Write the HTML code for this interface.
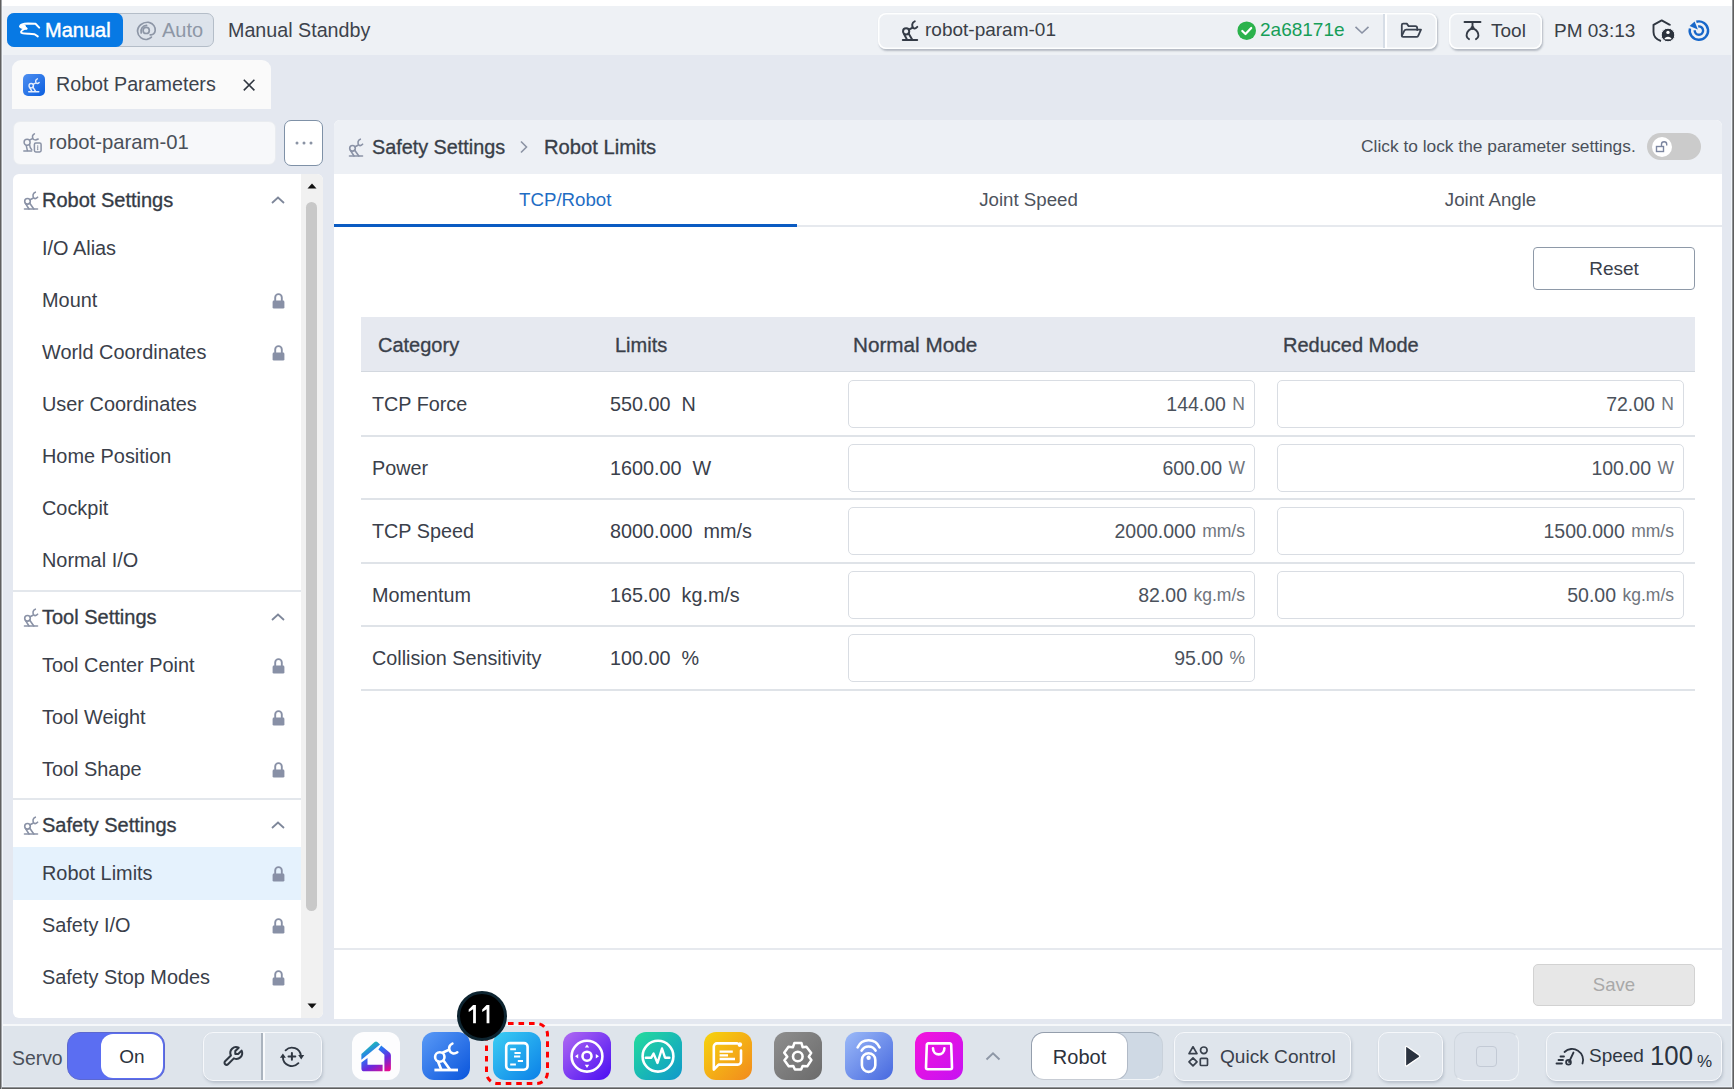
<!DOCTYPE html>
<html><head><meta charset="utf-8">
<style>
*{box-sizing:border-box}
html,body{margin:0;padding:0}
body{width:1734px;height:1089px;overflow:hidden;position:relative;background:#e4e8f0;font-family:"Liberation Sans",sans-serif;color:#383e48}
.a{position:absolute}
.sb{-webkit-text-stroke:0.32px currentColor}
.t{position:absolute;white-space:nowrap;line-height:30px;height:30px}
svg{position:absolute;overflow:visible}
</style></head><body>
<svg width="0" height="0" style="position:absolute"><defs>
<symbol id="robo" viewBox="0 0 16 19"><g fill="none" stroke="#8a92a6" stroke-width="1.6" stroke-linecap="round" stroke-linejoin="round">
<path d="M1.5 18 H14.5"/><circle cx="4.5" cy="10.3" r="2.8"/><path d="M2.6 12.6 L6 18 M6.6 12 L10.8 18"/><path d="M7 8.8 L10 7.2"/><path d="M12.3 1.2 C9.6 2.2 9.4 5.6 11 7.2 C12 8 13.2 7.6 14.6 6.2"/></g></symbol>
<symbol id="lock" viewBox="0 0 13 17"><path d="M3.2 9 V5.4 A3.3 3.3 0 0 1 9.8 5.4 V9" fill="none" stroke="#8890a6" stroke-width="1.9"/><rect x="0.6" y="8.6" width="11.8" height="8" rx="1.3" fill="#8890a6"/></symbol>
</defs></svg>
<!-- frame edges -->
<div class="a" style="left:0;top:0;width:1734px;height:6px;background:#fff"></div>
<div class="a" style="left:0;top:6px;width:1734px;height:49px;background:#eef1f5"></div>

<!-- TOP BAR -->
<div class="a" style="left:7px;top:13px;width:207px;height:34px;background:#dde3eb;border:1px solid #b4bdc8;border-radius:7px"></div>
<div class="a" style="left:7px;top:13px;width:116px;height:34px;background:#0779e4;border-radius:7px"></div>
<div class="t" style="left:45px;top:15px;font-size:20px;color:#fff;-webkit-text-stroke:0.45px #fff">Manual</div>
<div class="t" style="left:162px;top:15px;font-size:20px;color:#8d97a6">Auto</div>
<div class="t" style="left:228px;top:15px;font-size:19.7px;color:#3d434c">Manual Standby</div>

<div class="a" style="left:878px;top:13px;width:559px;height:36px;background:#edf0f4;border-radius:8px;box-shadow:1px 1.5px 2px rgba(60,70,90,.32),0 0 0 1.5px rgba(255,255,255,.95) inset"></div>
<div class="a" style="left:1383px;top:14px;width:2px;height:34px;background:#d6dde6"></div>
<div class="a" style="left:1385px;top:14px;width:1.5px;height:34px;background:#fff"></div>
<div class="t" style="left:925px;top:15px;font-size:19px;color:#3a3f47">robot-param-01</div>
<div class="t" style="left:1260px;top:15px;font-size:19px;color:#169e58">2a68171e</div>
<div class="a" style="left:1449px;top:13px;width:93px;height:36px;background:#edf0f4;border-radius:8px;box-shadow:1px 1.5px 2px rgba(60,70,90,.32),0 0 0 1.5px rgba(255,255,255,.95) inset"></div>
<div class="t" style="left:1491px;top:16px;font-size:19px;color:#3a3f47">Tool</div>
<div class="t" style="left:1554px;top:16px;font-size:19px;color:#3a3f47">PM 03:13</div>
<svg style="left:18px;top:21px" width="23" height="17" viewBox="0 0 23 17"><g fill="none" stroke="#fff" stroke-width="2" stroke-linecap="round" stroke-linejoin="round"><path d="M2 5.5 C2.5 3.5 6 2.5 10 2.5 L17.5 2.8 L21.2 6.6"/><path d="M8.2 7.4 C5 8.5 2.5 10 3.2 11.6 C4 12.6 8 12.6 11 12.7 L16.6 13.2 L19.8 15.4"/></g><ellipse cx="4.8" cy="5.6" rx="3.2" ry="2.2" fill="#fff"/><path d="M4 6.5 L8.5 7.6" stroke="#fff" stroke-width="2.2" stroke-linecap="round"/></svg>
<svg style="left:136px;top:21px" width="21" height="20" viewBox="0 0 21 20"><g fill="none" stroke="#8d96a6" stroke-width="1.7" stroke-linecap="round"><path d="M12.6 1.3 C6.5 0.8 1.2 5.2 1.6 10.8 C2 15.8 6.5 19 11 18.4 C12.8 18.1 14.3 17.3 15.4 16.2"/><path d="M13.6 1.6 C17.2 2.6 19.6 6 19.2 9.6 C18.9 12.4 16.8 14.3 14.2 13.8"/><circle cx="10.2" cy="9.4" r="3.1"/><path d="M5.2 12 C4.2 8 6.8 4.6 10.6 4.4"/></g></svg>
<svg style="left:901px;top:20px" width="18" height="21" viewBox="0 0 16 19"><g fill="none" stroke="#343b46" stroke-width="1.8" stroke-linecap="round" stroke-linejoin="round"><path d="M1.5 18 H14.5"/><circle cx="4.5" cy="10.3" r="2.8"/><path d="M2.6 12.6 L5.4 18 M6.6 12 L10.2 18"/><path d="M7 8.8 L10 7.2"/><path d="M12.3 1.2 C9.6 2.2 9.4 5.6 11 7.2 C12 8 13.2 7.6 14.6 6.2"/></g></svg>
<svg style="left:1237px;top:21px" width="20" height="20" viewBox="0 0 20 20"><circle cx="9.7" cy="9.7" r="9.3" fill="#2bb24c"/><path d="M5.3 10 L8.5 13 L14.2 7" fill="none" stroke="#fff" stroke-width="2.2" stroke-linecap="round" stroke-linejoin="round"/></svg>
<svg style="left:1354px;top:25px" width="16" height="10" viewBox="0 0 16 10"><path d="M1.5 1.8 L8 8 L14.5 1.8" fill="none" stroke="#8a92a4" stroke-width="1.6"/></svg>
<svg style="left:1400px;top:22px" width="23" height="17" viewBox="0 0 23 17"><g fill="none" stroke="#3a4250" stroke-width="1.8" stroke-linejoin="round" stroke-linecap="round"><path d="M1.8 13.5 V3 Q1.8 1.6 3.2 1.6 H6.8 L8.6 4.1 H15.3 Q17.2 4.1 17.2 6.2 V8"/><path d="M1.8 13.8 L4.2 8.8 Q4.8 7.6 6.2 7.6 H21 L18.2 13.8 Q17.7 14.9 16.4 14.9 H3 Q1.8 14.9 1.8 13.8 Z"/></g></svg>
<svg style="left:1462px;top:20px" width="21" height="21" viewBox="0 0 21 21"><g fill="none" stroke="#343b46" stroke-width="1.9" stroke-linecap="round" stroke-linejoin="round"><path d="M2.5 2 H18.5"/><path d="M10.5 2 V6.5"/><path d="M9.4 8.6 C6.2 10.2 4.4 12.8 4.6 15.8 C4.8 17.6 5.8 18.6 7 19.2"/><path d="M11.6 8.6 C14.8 10.2 16.6 12.8 16.4 15.8 C16.2 17.6 15.2 18.6 14 19.2"/></g><circle cx="10.5" cy="8" r="2" fill="#343b46"/></svg>
<svg style="left:1651px;top:18px" width="26" height="26" viewBox="0 0 26 26"><path d="M18.8 7.5 V6.8 L10.7 2.4 L2.5 6.8 V14 C2.5 18 5.5 21.5 10 23" fill="none" stroke="#2f3640" stroke-width="1.9" stroke-linejoin="round"/><circle cx="17" cy="17" r="6.8" fill="#2b323c" stroke="#eef1f5" stroke-width="1"/><circle cx="17" cy="14.4" r="1.7" fill="#fff"/><path d="M13.4 21.2 C13.8 17.8 20.2 17.8 20.6 21.2 Z" fill="#fff"/></svg>
<svg style="left:1687px;top:19px" width="24" height="23" viewBox="0 0 24 23"><g fill="none" stroke="#1767c9" stroke-width="2.4"><path d="M9.36 2.76 A9.2 9.2 0 1 1 2.95 9.45"/><path d="M11.2 7.46 A4.2 4.2 0 1 1 7.71 11.26"/></g><path d="M2.6 6.9 L7.6 2.4 L10.9 10.6 Z" fill="#1767c9"/></svg>
<svg style="z-index:5;left:27px;top:76.5px" width="13.5" height="16" viewBox="0 0 16 19"><g fill="none" stroke="#e6eefc" stroke-width="1.7" stroke-linecap="round" stroke-linejoin="round"><path d="M2 17.5 H14"/><circle cx="5" cy="10.3" r="2.6"/><path d="M3.3 12.6 L5.8 17 M7 12 L10.2 17"/><path d="M7.2 8.8 L10 7.4"/><path d="M12.3 2.2 C9.9 3 9.7 5.8 11.1 7.2 C12 8 13.2 7.6 14.4 6.4"/></g></svg>
<svg style="z-index:5;left:242px;top:78px" width="14" height="14" viewBox="0 0 14 14"><path d="M1.8 1.8 L12.4 12.4 M12.4 1.8 L1.8 12.4" stroke="#2f3640" stroke-width="1.6"/></svg>
<svg style="z-index:5;left:23px;top:133px" width="20" height="20" viewBox="0 0 20 20"><g fill="none" stroke="#8a92a6" stroke-width="1.5" stroke-linecap="round" stroke-linejoin="round"><path d="M0.8 17.9 H8.6"/><circle cx="4.1" cy="9.3" r="3"/><path d="M3.2 12.4 L4.4 17.6 M6.6 11.8 C6.8 14.5 7.4 15.8 8.8 16.8"/><path d="M6.8 6.9 L9.8 5.5"/><path d="M11.4 0.8 C9.6 1.8 9.1 3.6 9.9 5.5 C10.6 6.9 12.4 7.6 15.2 6"/><rect x="11.4" y="10.1" width="6.7" height="8.8" rx="1.4"/><path d="M14.7 12.9 V13.2 M14.7 14.6 V14.9 M14.7 16.2 V16.5" stroke-width="1.3"/></g></svg>
<svg style="z-index:5;left:294px;top:140px" width="20" height="6" viewBox="0 0 20 6"><circle cx="3" cy="3" r="1.5" fill="#8a93a4"/><circle cx="10" cy="3" r="1.5" fill="#8a93a4"/><circle cx="17" cy="3" r="1.5" fill="#8a93a4"/></svg>

<!-- TAB STRIP -->
<div class="a" style="left:12px;top:60px;width:259px;height:49px;background:#fafafa;border-radius:9px 9px 0 0"></div>
<div class="a" style="left:23px;top:74px;width:22px;height:22px;border-radius:5px;background:linear-gradient(135deg,#4f8ff0,#0b5fe0)"></div>
<div class="t" style="left:56px;top:69px;font-size:19.7px;color:#3d434c">Robot Parameters</div>

<!-- LEFT FIELD -->
<div class="a" style="left:13px;top:121px;width:263px;height:44px;background:#f7f8fa;border-radius:7px;border:1px solid #e9ecf0"></div>
<div class="t" style="left:49px;top:127px;font-size:20.3px;color:#4a5059">robot-param-01</div>
<div class="a" style="left:284px;top:120px;width:39px;height:46px;background:#fff;border:1.8px solid #7f91a7;border-radius:7px"></div>

<!-- SIDEBAR -->
<div class="a" id="sb" style="left:13px;top:174px;width:310px;height:844px;background:#fff;border-radius:6px;overflow:hidden">
<div class="a" style="left:0;top:673px;width:288px;height:53px;background:#e5f2fd"></div>
<svg style="left:10px;top:17px" width="16" height="19" viewBox="0 0 16 19"><use href="#robo"/></svg>
<div class="t" style="left:29px;top:11px;font-size:20px;color:#353b45;-webkit-text-stroke:0.32px #353b45">Robot Settings</div>
<svg style="left:258px;top:22px" width="14" height="8" viewBox="0 0 14 8"><path d="M1 7 L7 1.5 L13 7" fill="none" stroke="#7e879a" stroke-width="1.8"/></svg>
<div class="t" style="left:29px;top:59px;font-size:19.9px;color:#3a404a">I/O Alias</div>
<div class="t" style="left:29px;top:111px;font-size:19.9px;color:#3a404a">Mount</div><svg style="left:259px;top:117.5px" width="13" height="17" viewBox="0 0 13 17"><use href="#lock"/></svg>
<div class="t" style="left:29px;top:163px;font-size:19.9px;color:#3a404a">World Coordinates</div><svg style="left:259px;top:169.5px" width="13" height="17" viewBox="0 0 13 17"><use href="#lock"/></svg>
<div class="t" style="left:29px;top:215px;font-size:19.9px;color:#3a404a">User Coordinates</div>
<div class="t" style="left:29px;top:267px;font-size:19.9px;color:#3a404a">Home Position</div>
<div class="t" style="left:29px;top:319px;font-size:19.9px;color:#3a404a">Cockpit</div>
<div class="t" style="left:29px;top:371px;font-size:19.9px;color:#3a404a">Normal I/O</div>
<div class="a" style="left:0;top:416px;width:288px;height:2px;background:#e3e7ec"></div>
<svg style="left:10px;top:434px" width="16" height="19" viewBox="0 0 16 19"><use href="#robo"/></svg>
<div class="t" style="left:29px;top:428px;font-size:20px;color:#353b45;-webkit-text-stroke:0.32px #353b45">Tool Settings</div>
<svg style="left:258px;top:439px" width="14" height="8" viewBox="0 0 14 8"><path d="M1 7 L7 1.5 L13 7" fill="none" stroke="#7e879a" stroke-width="1.8"/></svg>
<div class="t" style="left:29px;top:476px;font-size:19.9px;color:#3a404a">Tool Center Point</div><svg style="left:259px;top:482.5px" width="13" height="17" viewBox="0 0 13 17"><use href="#lock"/></svg>
<div class="t" style="left:29px;top:528px;font-size:19.9px;color:#3a404a">Tool Weight</div><svg style="left:259px;top:534.5px" width="13" height="17" viewBox="0 0 13 17"><use href="#lock"/></svg>
<div class="t" style="left:29px;top:580px;font-size:19.9px;color:#3a404a">Tool Shape</div><svg style="left:259px;top:586.5px" width="13" height="17" viewBox="0 0 13 17"><use href="#lock"/></svg>
<div class="a" style="left:0;top:624px;width:288px;height:2px;background:#e3e7ec"></div>
<svg style="left:10px;top:642px" width="16" height="19" viewBox="0 0 16 19"><use href="#robo"/></svg>
<div class="t" style="left:29px;top:636px;font-size:20px;color:#353b45;-webkit-text-stroke:0.32px #353b45">Safety Settings</div>
<svg style="left:258px;top:647px" width="14" height="8" viewBox="0 0 14 8"><path d="M1 7 L7 1.5 L13 7" fill="none" stroke="#7e879a" stroke-width="1.8"/></svg>
<div class="t" style="left:29px;top:684px;font-size:19.9px;color:#3a404a">Robot Limits</div><svg style="left:259px;top:690.5px" width="13" height="17" viewBox="0 0 13 17"><use href="#lock"/></svg>
<div class="t" style="left:29px;top:736px;font-size:19.9px;color:#3a404a">Safety I/O</div><svg style="left:259px;top:742.5px" width="13" height="17" viewBox="0 0 13 17"><use href="#lock"/></svg>
<div class="t" style="left:29px;top:788px;font-size:19.9px;color:#3a404a">Safety Stop Modes</div><svg style="left:259px;top:794.5px" width="13" height="17" viewBox="0 0 13 17"><use href="#lock"/></svg>
<div class="a" style="left:288px;top:0;width:22px;height:844px;background:#f1f1f1"></div>
<svg style="left:294px;top:9px" width="10" height="6" viewBox="0 0 10 6"><path d="M0.5 5.6 L5 0.6 L9.5 5.6 Z" fill="#111"/></svg>
<svg style="left:294px;top:829px" width="10" height="6" viewBox="0 0 10 6"><path d="M0.5 0.4 L5 5.4 L9.5 0.4 Z" fill="#111"/></svg>
<div class="a" style="left:293px;top:28px;width:10.5px;height:709px;background:#c8c8c8;border-radius:6px"></div>
</div>

<!-- MAIN PANEL -->
<div class="a" style="left:334px;top:120px;width:1388px;height:899px;background:#fff;border-radius:6px 6px 0 0;overflow:hidden">
  <div class="a" style="left:0;top:0;width:1388px;height:54px;background:#edf0f5"></div>
  <svg style="left:14px;top:18px" width="16" height="19" viewBox="0 0 16 19"><use href="#robo"/></svg>
  <div class="t" style="left:38px;top:12px;font-size:19.8px;color:#383e48;-webkit-text-stroke:0.32px #383e48">Safety Settings</div>
  <svg style="left:185px;top:20px" width="10" height="14" viewBox="0 0 10 14"><path d="M2 1.5 L7.5 7 L2 12.5" fill="none" stroke="#8b93a3" stroke-width="1.6"/></svg>
  <div class="t" style="left:210px;top:12px;font-size:20.2px;color:#383e48;-webkit-text-stroke:0.32px #383e48">Robot Limits</div>
  <div class="t" style="left:1027px;top:11px;font-size:17.35px;color:#4a505a">Click to lock the parameter settings.</div>
  <div class="a" style="left:1313px;top:13px;width:54px;height:27px;border-radius:14px;background:#cbcbcb"></div>
  <div class="a" style="left:1318px;top:17px;width:20px;height:20px;border-radius:10px;background:#fff"></div>
  <svg style="left:1321px;top:20px" width="14" height="14" viewBox="0 0 14 14"><rect x="1.5" y="6.5" width="7" height="5" fill="none" stroke="#7c86a0" stroke-width="1.4"/><path d="M6.5 6.5 V4.3 A2.6 2.6 0 0 1 11.7 4.3 V5.5" fill="none" stroke="#7c86a0" stroke-width="1.4"/></svg>
  <div class="a" style="left:0px;top:105px;width:1388px;height:2px;background:#e6e9ee"></div>
  <div class="a" style="left:0px;top:104px;width:463px;height:3px;background:#0b5bc2"></div>
  <div class="t" style="left:185px;top:65px;font-size:18.7px;color:#1f6dc4">TCP/Robot</div>
  <div class="t" style="left:463px;top:65px;width:463px;text-align:center;font-size:18.7px;color:#4d535d">Joint Speed</div>
  <div class="t" style="left:925px;top:65px;width:463px;text-align:center;font-size:18.7px;color:#4d535d">Joint Angle</div>
  <div class="a" style="left:1199px;top:127px;width:162px;height:43px;border:1.5px solid #8e99a8;border-radius:4px;background:#fff"></div>
  <div class="t" style="left:1199px;top:134px;width:162px;text-align:center;font-size:19px;color:#3a404a">Reset</div>
  <div class="a" style="left:27px;top:197px;width:1334px;height:55px;background:#e6e9f0;border-bottom:1.5px solid #d3d8df"></div>
  <div class="t" style="left:44px;top:210px;font-size:20px;color:#3a404a;-webkit-text-stroke:0.32px #3a404a">Category</div>
  <div class="t" style="left:281px;top:210px;font-size:20px;color:#3a404a;-webkit-text-stroke:0.32px #3a404a">Limits</div>
  <div class="t" style="left:519px;top:210px;font-size:20.7px;color:#3a404a;-webkit-text-stroke:0.32px #3a404a">Normal Mode</div>
  <div class="t" style="left:949px;top:210px;font-size:20px;color:#3a404a;-webkit-text-stroke:0.32px #3a404a">Reduced Mode</div>
  <div class="a" style="left:27px;top:315px;width:1334px;height:1.5px;background:#dfe3e8"></div>
  <div class="t" style="left:38px;top:269.0px;font-size:19.8px;color:#3a404a">TCP Force</div>
  <div class="t" style="left:276px;top:269.0px;font-size:19.8px;color:#3a404a">550.00&nbsp; N</div>
  <div class="a" style="left:514px;top:260px;width:407px;height:48px;border:1.5px solid #d9dde3;border-radius:5px;background:#fff"></div>
  <div class="t" style="left:514px;top:269.0px;width:397px;text-align:right;font-size:19.5px;color:#4b525c">144.00 <span style="font-size:17.5px;color:#70757d;margin-left:1px;vertical-align:1px">N</span></div>
  <div class="a" style="left:943px;top:260px;width:407px;height:48px;border:1.5px solid #d9dde3;border-radius:5px;background:#fff"></div>
  <div class="t" style="left:943px;top:269.0px;width:397px;text-align:right;font-size:19.5px;color:#4b525c">72.00 <span style="font-size:17.5px;color:#70757d;margin-left:1px;vertical-align:1px">N</span></div>
  <div class="a" style="left:27px;top:378px;width:1334px;height:1.5px;background:#dfe3e8"></div>
  <div class="t" style="left:38px;top:332.5px;font-size:19.8px;color:#3a404a">Power</div>
  <div class="t" style="left:276px;top:332.5px;font-size:19.8px;color:#3a404a">1600.00&nbsp; W</div>
  <div class="a" style="left:514px;top:324px;width:407px;height:48px;border:1.5px solid #d9dde3;border-radius:5px;background:#fff"></div>
  <div class="t" style="left:514px;top:332.5px;width:397px;text-align:right;font-size:19.5px;color:#4b525c">600.00 <span style="font-size:17.5px;color:#70757d;margin-left:1px;vertical-align:1px">W</span></div>
  <div class="a" style="left:943px;top:324px;width:407px;height:48px;border:1.5px solid #d9dde3;border-radius:5px;background:#fff"></div>
  <div class="t" style="left:943px;top:332.5px;width:397px;text-align:right;font-size:19.5px;color:#4b525c">100.00 <span style="font-size:17.5px;color:#70757d;margin-left:1px;vertical-align:1px">W</span></div>
  <div class="a" style="left:27px;top:442px;width:1334px;height:1.5px;background:#dfe3e8"></div>
  <div class="t" style="left:38px;top:396.0px;font-size:19.8px;color:#3a404a">TCP Speed</div>
  <div class="t" style="left:276px;top:396.0px;font-size:19.8px;color:#3a404a">8000.000&nbsp; mm/s</div>
  <div class="a" style="left:514px;top:387px;width:407px;height:48px;border:1.5px solid #d9dde3;border-radius:5px;background:#fff"></div>
  <div class="t" style="left:514px;top:396.0px;width:397px;text-align:right;font-size:19.5px;color:#4b525c">2000.000 <span style="font-size:17.5px;color:#70757d;margin-left:1px;vertical-align:1px">mm/s</span></div>
  <div class="a" style="left:943px;top:387px;width:407px;height:48px;border:1.5px solid #d9dde3;border-radius:5px;background:#fff"></div>
  <div class="t" style="left:943px;top:396.0px;width:397px;text-align:right;font-size:19.5px;color:#4b525c">1500.000 <span style="font-size:17.5px;color:#70757d;margin-left:1px;vertical-align:1px">mm/s</span></div>
  <div class="a" style="left:27px;top:505px;width:1334px;height:1.5px;background:#dfe3e8"></div>
  <div class="t" style="left:38px;top:459.5px;font-size:19.8px;color:#3a404a">Momentum</div>
  <div class="t" style="left:276px;top:459.5px;font-size:19.8px;color:#3a404a">165.00&nbsp; kg.m/s</div>
  <div class="a" style="left:514px;top:451px;width:407px;height:48px;border:1.5px solid #d9dde3;border-radius:5px;background:#fff"></div>
  <div class="t" style="left:514px;top:459.5px;width:397px;text-align:right;font-size:19.5px;color:#4b525c">82.00 <span style="font-size:17.5px;color:#70757d;margin-left:1px;vertical-align:1px">kg.m/s</span></div>
  <div class="a" style="left:943px;top:451px;width:407px;height:48px;border:1.5px solid #d9dde3;border-radius:5px;background:#fff"></div>
  <div class="t" style="left:943px;top:459.5px;width:397px;text-align:right;font-size:19.5px;color:#4b525c">50.00 <span style="font-size:17.5px;color:#70757d;margin-left:1px;vertical-align:1px">kg.m/s</span></div>
  <div class="a" style="left:27px;top:569px;width:1334px;height:1.5px;background:#dfe3e8"></div>
  <div class="t" style="left:38px;top:523.0px;font-size:19.8px;color:#3a404a">Collision Sensitivity</div>
  <div class="t" style="left:276px;top:523.0px;font-size:19.8px;color:#3a404a">100.00&nbsp; %</div>
  <div class="a" style="left:514px;top:514px;width:407px;height:48px;border:1.5px solid #d9dde3;border-radius:5px;background:#fff"></div>
  <div class="t" style="left:514px;top:523.0px;width:397px;text-align:right;font-size:19.5px;color:#4b525c">95.00 <span style="font-size:17.5px;color:#70757d;margin-left:1px;vertical-align:1px">%</span></div>
  <div class="a" style="left:0px;top:828px;width:1388px;height:1.5px;background:#e6e9ee"></div>
  <div class="a" style="left:1199px;top:844px;width:162px;height:42px;border:1.5px solid #d2d2d2;border-radius:5px;background:#e7e7e7"></div>
  <div class="t" style="left:1199px;top:850px;width:162px;text-align:center;font-size:18.6px;color:#a9a9a9">Save</div>
</div>

<!-- BOTTOM BAR -->
<div class="a" style="left:0;top:1024px;width:1734px;height:2px;background:#f6f8fa"></div>
<div class="a" style="left:0;top:1026px;width:1734px;height:61px;background:#dee4eb"></div>
<div class="t" style="left:12px;top:1043px;font-size:19.4px;color:#4a505a">Servo</div>
<div class="a" style="left:67px;top:1032px;width:98px;height:48px;border-radius:13px;background:#5b6ef2;border:1.5px solid #5c68cf"></div>
<div class="a" style="left:101px;top:1034px;width:62px;height:44px;border-radius:12px;background:#fff"></div>
<div class="t" style="left:101px;top:1042px;width:62px;text-align:center;font-size:19px;color:#2c323c">On</div>
<div class="a" style="left:203px;top:1032px;width:119px;height:49px;border-radius:10px;background:#dfe5ec;border:1.5px solid #f6f8fb;box-shadow:1px 2px 3px rgba(90,105,125,.28)"></div>
<div class="a" style="left:261px;top:1033px;width:1.5px;height:47px;background:#aab3be"></div>
<div class="a" style="left:262.5px;top:1033px;width:2.5px;height:47px;background:#f8fafc"></div>
<svg style="left:218px;top:1042px" width="30" height="28" viewBox="0 0 30 28"><g transform="translate(27,2.3) scale(-0.97,0.97)"><path d="M7 10h3v-3l-3.5 -3.5a6 6 0 0 1 8 8l6 6a2 2 0 0 1 -3 3l-6 -6a6 6 0 0 1 -8 -8l3.5 3.5" fill="none" stroke="#2f3742" stroke-width="2.1" stroke-linecap="round" stroke-linejoin="round"/></g></svg>
<svg style="left:276px;top:1042px" width="32" height="28" viewBox="0 0 32 28"><g fill="none" stroke="#2f3742" stroke-width="1.9" stroke-linecap="round"><path d="M9.6 8.3 A9 9 0 0 1 24.9 13.8"/><path d="M22.4 21.2 A9 9 0 0 1 6.9 15"/><path d="M15.9 11 V17.8 M12.5 14.4 H19.3" stroke-width="2"/></g><path d="M22.2 13 H28.2 L25.2 17.4 Z M3.9 15.8 H9.9 L6.9 11.4 Z" fill="#2f3742"/></svg>
<div class="a" style="left:352px;top:1032px;width:48px;height:48px;border-radius:12px;background:#fdfdfe"></div><svg style="left:352px;top:1032px" width="48" height="48" viewBox="0 0 48 48"><defs><linearGradient id="hg" gradientUnits="userSpaceOnUse" x1="16" y1="9" x2="34" y2="40"><stop offset="0" stop-color="#1cd4a0"/><stop offset="0.38" stop-color="#2b72f4"/><stop offset="0.66" stop-color="#6b28dc"/><stop offset="1" stop-color="#e60c8e"/></linearGradient></defs>
<path d="M9.4 21.9 L22.6 10.1 Q24 9 25.4 10.1 L28 12.6 L9.4 27.8 Z" fill="url(#hg)"/>
<path d="M29.2 13.5 L37.6 20.6 Q38.9 21.7 38.9 23.4 V36.4 Q38.9 39.3 36 39.3 H32.4 V22.8 L26.4 17.4 Z" fill="url(#hg)"/>
<path d="M9.4 30.6 L15.5 26 V32.8 H30.6 V39.3 H12.4 Q9.4 39.3 9.4 36.4 Z" fill="url(#hg)"/></svg>
<div class="a" style="left:422px;top:1032px;width:48px;height:48px;border-radius:12px;background:linear-gradient(135deg,#5a9af6,#0a55dc)"></div><svg style="left:422px;top:1032px" width="48" height="48" viewBox="0 0 48 48"><path d="M12.4 38 H36" fill="none" stroke="#fff" stroke-width="2.8" stroke-linecap="butt"/><circle cx="17.8" cy="25" r="4.7" fill="none" stroke="#fff" stroke-width="2.6" stroke-linecap="round" stroke-linejoin="round"/><path d="M16 29.6 L19.2 37.6 M21.8 29 L27.9 37.6 M21 20.5 L27.2 17.6 M30.4 11.6 C28.2 12.6 26.6 15 27.4 18.2 C28.4 21.4 32.2 22.6 35.3 20.3" fill="none" stroke="#fff" stroke-width="2.6" stroke-linecap="round" stroke-linejoin="round"/></svg>
<div class="a" style="left:493px;top:1032px;width:48px;height:48px;border-radius:12px;background:linear-gradient(135deg,#3ccef3,#0b80e8)"></div><svg style="left:493px;top:1032px" width="48" height="48" viewBox="0 0 48 48"><rect x="13.2" y="11.1" width="21.4" height="26.6" rx="3.6" fill="none" stroke="#fff" stroke-width="2.6" stroke-linecap="round" stroke-linejoin="round"/><path d="M17.2 17.2 H22.9 M21.5 21 H27.7 M21 24.4 H27.2 M24.8 28.9 H30 M17.2 32.5 H22.9" stroke="#fff" stroke-width="2"/></svg>
<div class="a" style="left:563px;top:1032px;width:48px;height:48px;border-radius:12px;background:linear-gradient(135deg,#b06af2,#4a0ef2)"></div><svg style="left:563px;top:1032px" width="48" height="48" viewBox="0 0 48 48"><circle cx="24" cy="24.2" r="15.4" fill="none" stroke="#fff" stroke-width="2.6" stroke-linecap="round" stroke-linejoin="round"/><circle cx="24" cy="24.2" r="4.5" fill="none" stroke="#fff" stroke-width="2.6" stroke-linecap="round" stroke-linejoin="round"/><path d="M24 12.4 L21.8 15.6 H26.2 Z M24 36 L21.8 32.8 H26.2 Z M12 24.2 L15.2 22 V26.4 Z M36 24.2 L32.8 22 V26.4 Z" fill="#fff"/></svg>
<div class="a" style="left:634px;top:1032px;width:48px;height:48px;border-radius:12px;background:linear-gradient(135deg,#24dc9c,#0f98cc)"></div><svg style="left:634px;top:1032px" width="48" height="48" viewBox="0 0 48 48"><circle cx="24" cy="24.2" r="15.4" fill="none" stroke="#fff" stroke-width="2.6" stroke-linecap="round" stroke-linejoin="round"/><path d="M11.8 25.7 H17.3 L19.6 21.6 L23.5 31 L28 16.5 L31 25.7 H35.4" fill="none" stroke="#fff" stroke-width="2.4" stroke-linecap="round" stroke-linejoin="round"/></svg>
<div class="a" style="left:704px;top:1032px;width:48px;height:48px;border-radius:12px;background:linear-gradient(135deg,#f6d40e,#f28a1e)"></div><svg style="left:704px;top:1032px" width="48" height="48" viewBox="0 0 48 48"><path d="M33 11.4 H13 A3.2 3.2 0 0 0 9.8 14.6 V37.6 L14.6 32.6 H33.8 A3.2 3.2 0 0 0 37 29.4 V18.6" fill="none" stroke="#fff" stroke-width="2.6" stroke-linecap="round" stroke-linejoin="round"/><circle cx="35.8" cy="12.6" r="2.3" fill="#fff"/><path d="M15.6 19.6 H28.8 M15.6 23.4 H24 M15.6 27 H31" stroke="#fff" stroke-width="2.3"/></svg>
<div class="a" style="left:774px;top:1032px;width:48px;height:48px;border-radius:12px;background:linear-gradient(135deg,#8e8e8e,#6b6b6b)"></div><svg style="left:774px;top:1032px" width="48" height="48" viewBox="0 0 48 48"><path d="M20.4 10.9 H27.4 L28.6 15.2 L32.4 14.7 L37.2 20.9 L34.8 24.7 L37.4 28.1 L33.3 34.3 L28.6 34 L27.1 37.6 H20.9 L19.3 34 L14.7 34.3 L10.4 28.3 L13.3 24.7 L10.2 20.7 L14.5 14.7 L19 15.2 Z" fill="none" stroke="#fff" stroke-width="2.5" stroke-linecap="round" stroke-linejoin="round"/><circle cx="23.8" cy="24.5" r="4.8" fill="none" stroke="#fff" stroke-width="2.6" stroke-linecap="round" stroke-linejoin="round"/></svg>
<div class="a" style="left:845px;top:1032px;width:48px;height:48px;border-radius:12px;background:linear-gradient(135deg,#9cbaf8,#4668df)"></div><svg style="left:845px;top:1032px" width="48" height="48" viewBox="0 0 48 48"><rect x="16.9" y="21.2" width="13.4" height="18.7" rx="6.7" fill="none" stroke="#fff" stroke-width="2.6" stroke-linecap="round" stroke-linejoin="round"/><circle cx="23.6" cy="25.8" r="2.2" fill="#fff"/><path d="M12.6 15.4 A12 12 0 0 1 34.6 15.4 M16.6 18.6 A8 8 0 0 1 30.6 18.6" fill="none" stroke="#fff" stroke-width="2.6" stroke-linecap="round" stroke-linejoin="round"/></svg>
<div class="a" style="left:915px;top:1032px;width:48px;height:48px;border-radius:12px;background:linear-gradient(135deg,#f414dc,#c612f2)"></div><svg style="left:915px;top:1032px" width="48" height="48" viewBox="0 0 48 48"><path d="M13.2 11.4 H34.8 A1.4 1.4 0 0 1 36.2 12.8 L37 35.6 A1.6 1.6 0 0 1 35.4 37.2 H12.6 A1.6 1.6 0 0 1 11 35.6 L11.8 12.8 A1.4 1.4 0 0 1 13.2 11.4 Z" fill="none" stroke="#fff" stroke-width="2.6" stroke-linecap="round" stroke-linejoin="round"/><path d="M18 16.2 C18 24.4 29.4 24.4 29.4 16.2" fill="none" stroke="#fff" stroke-width="2.6" stroke-linecap="round" stroke-linejoin="round"/></svg>
<svg style="left:985px;top:1051px" width="16" height="10" viewBox="0 0 16 10"><path d="M1.5 8.5 L8 2.2 L14.5 8.5" fill="none" stroke="#8e97a6" stroke-width="1.9"/></svg>
<div class="a" style="left:1031px;top:1032px;width:132px;height:48px;border-radius:13px;background:#cfd9e4;border:1.5px solid #a3aebb;border-bottom-color:#f2f5f8;border-right-color:#c9d1da"></div>
<div class="a" style="left:1032px;top:1033px;width:95px;height:46px;border-radius:12px;background:#fff;box-shadow:0 0 0 1px rgba(120,130,145,.35)"></div>
<div class="t" style="left:1032px;top:1042px;width:95px;text-align:center;font-size:20px;color:#2c323c">Robot</div>
<div class="a" style="left:1174px;top:1032px;width:177px;height:49px;border-radius:10px;background:#dfe5ec;border:1.5px solid #f6f8fb;box-shadow:1px 2px 3px rgba(90,105,125,.28)"></div>
<svg style="left:1187px;top:1045px" width="23" height="23" viewBox="0 0 23 23"><g fill="none" stroke="#39414d" stroke-width="1.7" stroke-linejoin="round"><path d="M6 1.8 L10 8.6 H2 Z"/><circle cx="16.8" cy="5.3" r="3.3"/><path d="M6 12.8 L10 16.8 L6 20.8 L2 16.8 Z"/><rect x="13.3" y="13.3" width="7.2" height="7.2" rx="1"/></g></svg>
<div class="t" style="left:1220px;top:1042px;font-size:19.1px;color:#3a414c">Quick Control</div>
<div class="a" style="left:1378px;top:1032px;width:65px;height:49px;border-radius:10px;background:#dfe5ec;border:1.5px solid #f6f8fb;box-shadow:1px 2px 3px rgba(90,105,125,.28)"></div>
<svg style="left:1402px;top:1044px" width="20" height="25" viewBox="0 0 20 25"><path d="M3.5 3.6 Q3.5 1.6 5.3 2.8 L17 10.9 Q18.7 12.2 17 13.5 L5.3 21.6 Q3.5 22.8 3.5 20.8 Z" fill="#2b3340" stroke="#fff" stroke-width="1.3"/></svg>
<div class="a" style="left:1454px;top:1032px;width:65px;height:49px;border-radius:10px;background:#dce2ea;border:1.5px solid #d0d7df;border-bottom-color:#f7f9fb;border-right-color:#eef2f6"></div>
<div class="a" style="left:1476px;top:1046px;width:21px;height:21px;border-radius:4px;border:1.6px solid #c3cad5"></div>
<div class="a" style="left:1546px;top:1032px;width:176px;height:49px;border-radius:10px;background:#dfe5ec;border:1.5px solid #f6f8fb;box-shadow:1px 2px 3px rgba(90,105,125,.28)"></div>
<svg style="left:1555px;top:1045px" width="30" height="21" viewBox="0 0 30 21"><g fill="none" stroke="#2c3440" stroke-width="1.8" stroke-linecap="round"><path d="M9.5 7 A11 11 0 0 1 27.5 18.5"/><path d="M1.5 18.5 H7 M3.5 15 H8 M5.5 11.5 H9"/><path d="M14 17 L18.5 7.5"/></g><circle cx="13.5" cy="17.2" r="2.4" fill="none" stroke="#2c3440" stroke-width="1.8"/></svg>
<div class="t" style="left:1589px;top:1041px;font-size:19px;color:#2f3742">Speed</div>
<div class="t" style="left:1650px;top:1036px;height:40px;line-height:40px;font-size:28px;color:#2a3340;transform:scaleX(0.92);transform-origin:0 0">100</div>
<div class="t" style="left:1697px;top:1047px;font-size:17px;color:#2a3340">%</div>
<svg style="left:484px;top:1021px" width="66" height="65" viewBox="0 0 66 65"><rect x="2.5" y="2.5" width="61" height="60" rx="11" fill="none" stroke="#ff0000" stroke-width="3" stroke-dasharray="5.6 4.9"/></svg>
<div class="a" style="left:457px;top:991px;width:50px;height:50px;border-radius:25px;background:#000;border:3px solid #0d2430"></div>
<svg style="left:457px;top:991px" width="50" height="50" viewBox="457 991 50 50"><path d="M473.1 1005 H475.9 V1023.2 H473.1 V1009.2 L468.7 1011.9 V1009.4 Z M486.6 1005 H489.4 V1023.2 H486.6 V1009.2 L482.2 1011.9 V1009.4 Z" fill="#fff"/></svg>
<div class="a" style="left:0;top:1086px;width:1734px;height:1px;background:#e9eef5"></div>
<div class="a" style="left:0;top:1087px;width:1734px;height:1px;background:#8e9194"></div>
<div class="a" style="left:0;top:1088px;width:1734px;height:1px;background:#5f5f5f"></div>
<div class="a" style="left:2px;top:6px;width:1px;height:1081px;background:#f2f6fb"></div>
<div class="a" style="left:1px;top:0;width:1px;height:1089px;background:#a3a6aa"></div>
<div class="a" style="left:0;top:0;width:1px;height:1089px;background:#5f5f5f"></div>
<div class="a" style="left:1731px;top:6px;width:1px;height:1081px;background:#f2f6fb"></div>
<div class="a" style="left:1732px;top:0;width:1px;height:1089px;background:#8e9194"></div>
<div class="a" style="left:1733px;top:0;width:1px;height:1089px;background:#5f5f5f"></div>
</body></html>
